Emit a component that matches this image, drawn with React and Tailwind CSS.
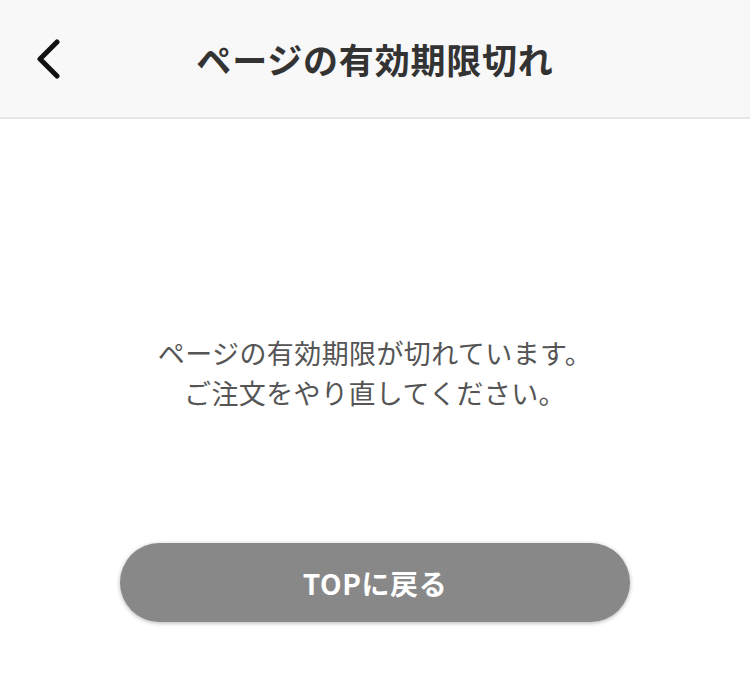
import React from 'react';

export default function App() {
    return (
        <div className="min-h-screen w-[750px] bg-white" style={{ fontFamily: '"Noto Sans CJK JP", "Noto Sans", sans-serif' }}>
            {/* Header */}
            <div className="relative flex h-[119px] items-center justify-center border-b-2 border-[#e6e6e6] bg-[#f8f8f8]">
                <button className="absolute left-[29px] top-1/2 -translate-y-1/2 p-1">
                    <svg width="30" height="40" viewBox="0 0 30 40" fill="none">
                        <path d="M24 3 L7 20 L24 37" stroke="#111" strokeWidth="5" strokeLinecap="round" strokeLinejoin="round" />
                    </svg>
                </button>
                <h1 className="text-[35px] font-bold leading-none tracking-[0.8px] text-[#333]">ページの有効期限切れ</h1>
            </div>

            <div className="flex flex-col items-center pt-[214px]">
                <p className="text-center text-[27px] leading-[40px] tracking-[0.4px] text-[#555]">
                    ページの有効期限が切れています。<br />
                    ご注文をやり直してください。
                </p>

                <button className="mt-[130px] flex h-[79px] w-[510px] items-center justify-center rounded-full bg-[#888888] text-[28px] font-bold tracking-[0.6px] text-white shadow-[0_1px_4px_rgba(0,0,0,0.3)]">
                    TOPに戻る
                </button>
            </div>
        </div>
    );
}
